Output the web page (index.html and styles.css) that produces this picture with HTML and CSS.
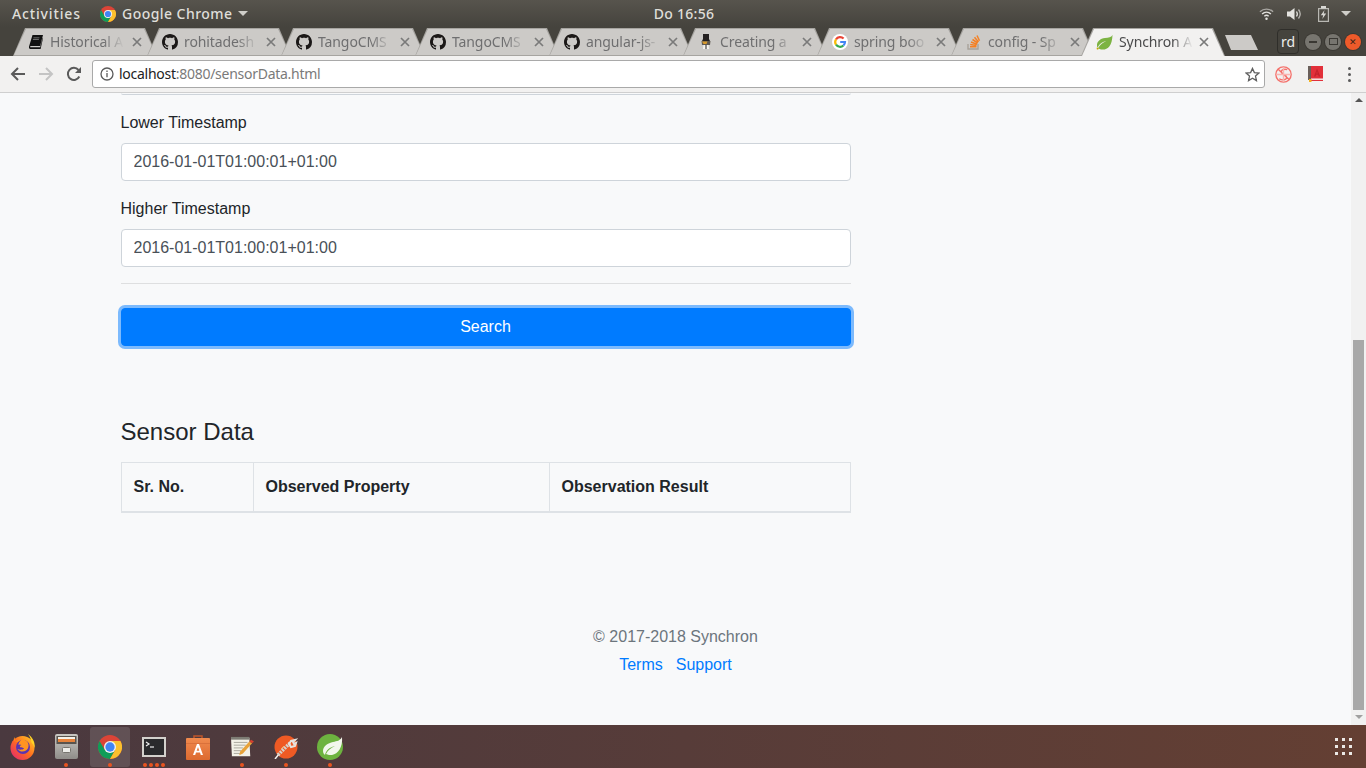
FILE: index.html
```html
<!DOCTYPE html>
<html lang="en">
<head>
    <meta charset="UTF-8">
    <meta name="viewport" content="width=device-width, initial-scale=1.0">
    <title>Synchron Admin</title>
    <link rel="stylesheet" href="styles.css">
</head>
<body>

    <svg class="defs" width="0" height="0">
        <defs>
            <linearGradient id="g-fox" x1="1" y1="0" x2="0" y2="1">
                <stop offset="0" stop-color="#ffd426"/>
                <stop offset=".5" stop-color="#ff6a1f"/>
                <stop offset="1" stop-color="#e0207a"/>
            </linearGradient>
            <linearGradient id="g-metal" x1="0" y1="0" x2="0" y2="1">
                <stop offset="0" stop-color="#c9c7c3"/>
                <stop offset="1" stop-color="#8f8d89"/>
            </linearGradient>
            <linearGradient id="g-bag" x1="0" y1="0" x2="0" y2="1">
                <stop offset="0" stop-color="#f08a4e"/>
                <stop offset="1" stop-color="#dd6a30"/>
            </linearGradient>
        </defs>
        <symbol id="i-close" viewBox="0 0 10 10">
            <path fill="none" stroke="#7a7a7a" stroke-width="1.700" d="M1 1l8 8M9 1l-8 8"/>
        </symbol>
        <symbol id="i-github" viewBox="0 0 16 16">
            <path fill="#1b1817" d="M8 0C3.58 0 0 3.58 0 8c0 3.54 2.29 6.53 5.47 7.59.4.07.55-.17.55-.38 0-.19-.01-.82-.01-1.49-2.01.37-2.53-.49-2.69-.94-.09-.23-.48-.94-.82-1.13-.28-.15-.68-.52-.01-.53.63-.01 1.08.58 1.23.82.72 1.21 1.87.87 2.33.66.07-.52.28-.87.51-1.07-1.78-.2-3.64-.89-3.64-3.95 0-.87.31-1.59.82-2.15-.08-.2-.36-1.02.08-2.12 0 0 .67-.21 2.2.82.64-.18 1.32-.27 2-.27.68 0 1.36.09 2 .27 1.53-1.04 2.2-.82 2.2-.82.44 1.1.16 1.92.08 2.12.51.56.82 1.27.82 2.15 0 3.07-1.87 3.75-3.65 3.95.29.25.54.73.54 1.48 0 1.07-.01 1.93-.01 2.2 0 .21.15.46.55.38A8.013 8.013 0 0 0 16 8c0-4.42-3.58-8-8-8z"/>
        </symbol>
        <symbol id="i-chrome" viewBox="0 0 32 32">
            <circle cx="16" cy="16" r="16" fill="#db4437"/>
            <path fill="#0f9d58" d="M2.100 8A16 16 0 0 0 16 32l6.900-12L16 22l-6.900-2z"/>
            <path fill="#fbc02d" d="M16 32A16 16 0 0 0 29.900 8H16l6.900 12z"/>
            <circle cx="16" cy="16" r="8" fill="#f2f2f2"/>
            <circle cx="16" cy="16" r="6.200" fill="#4285f4"/>
        </symbol>
        <symbol id="i-spring" viewBox="0 0 18 16">
            <path fill="#7cb342" d="M17.500.5C16 3 13.500 3.400 9.500 3.800 4.500 4.300 1 7.500 1 11.500c0 1 .2 1.800.6 2.500 2-4 5.400-6.400 9.400-7-3.500 1.500-6.800 4-8.800 7.600C3.600 15.500 5 16 7 16c6 0 10-4.500 10.500-15.500z"/>
            <path fill="#c6a700" d="M.6 14h2.500l-.8 2H1z"/>
        </symbol>
    </svg>

    <header class="topbar">
        <div class="topbar-left">
            <span class="activities">Activities</span>
            <span class="app-menu">
                <svg class="topbar-chrome" width="16" height="16"><use href="#i-chrome"/></svg>
                Google Chrome
                <i class="caret"></i>
            </span>
        </div>
        <div class="clock">Do 16:56</div>
        <div class="topbar-right">
            <svg width="15" height="14" viewBox="0 0 16 14" fill="none" stroke="#e4e3df" stroke-width="1.500">
                <path d="M1 4.500c4-3.600 10-3.600 14 0" opacity=".6"/>
                <path d="M3.300 7c2.700-2.400 6.700-2.400 9.400 0"/>
                <path d="M5.700 9.400c1.300-1.100 3.300-1.100 4.600 0"/>
                <circle cx="8" cy="12" r="1.300" fill="#e4e3df" stroke="none"/>
            </svg>
            <svg width="16" height="14" viewBox="0 0 16 14" fill="none" stroke="#e4e3df" stroke-width="1.300">
                <path fill="#e4e3df" stroke="none" d="M0 4.500h3L7.500 1v12L3 9.500H0z"/>
                <path d="M9.500 4.500c1 1.500 1 3.500 0 5"/>
                <path d="M11.500 2.500c2 2.600 2 6.400 0 9" opacity=".7"/>
            </svg>
            <svg width="11" height="16" viewBox="0 0 11 16">
                <path fill="none" stroke="#b9b8b3" stroke-width="1.200" d="M.6 2.600h9.800v12.800H.6z"/>
                <path fill="#d8d7d3" d="M3 0h5v2.600H3zM6.500 4 2.800 9.300h2.400L4.300 13l3.900-5.500H5.700z"/>
            </svg>
            <i class="caret"></i>
        </div>
    </header>

    <div class="tabstrip">
        <div class="tab">
            <svg class="favicon" width="16" height="14" viewBox="0 0 14 14">
                <path fill="#111" d="M3.500 0H14l-2.800 11H2.200C1.300 11 1 11.600 1.300 12.200h9.900l2.400-9.400.4.500L11.600 14H1.500C.2 14-.3 12.800.1 11.300z"/>
                <path fill="#fff" d="M4.500 2.500h6l-.2.800h-6zM4 4.300h6l-.2.800h-6z" opacity=".5"/>
            </svg>
            <span class="tab-title">Historical A</span>
            <svg class="tab-close" width="10" height="10"><use href="#i-close"/></svg>
        </div>
        <div class="tab">
            <svg class="favicon" width="16" height="16"><use href="#i-github"/></svg>
            <span class="tab-title">rohitadesh</span>
            <svg class="tab-close" width="10" height="10"><use href="#i-close"/></svg>
        </div>
        <div class="tab">
            <svg class="favicon" width="16" height="16"><use href="#i-github"/></svg>
            <span class="tab-title">TangoCMS</span>
            <svg class="tab-close" width="10" height="10"><use href="#i-close"/></svg>
        </div>
        <div class="tab">
            <svg class="favicon" width="16" height="16"><use href="#i-github"/></svg>
            <span class="tab-title">TangoCMS</span>
            <svg class="tab-close" width="10" height="10"><use href="#i-close"/></svg>
        </div>
        <div class="tab">
            <svg class="favicon" width="16" height="16"><use href="#i-github"/></svg>
            <span class="tab-title">angular-js-</span>
            <svg class="tab-close" width="10" height="10"><use href="#i-close"/></svg>
        </div>
        <div class="tab">
            <svg class="favicon" width="16" height="16" viewBox="0 0 16 16">
                <path fill="#232020" d="M5 0h6v5l1 2H4l1-2z"/>
                <path fill="#5f5a52" d="M3.500 7h9l-.5 4h-8z"/>
                <path fill="#d99a2b" d="M4 7.500h5.500L8.500 10H5.500z"/>
                <path fill="#f6f4f0" d="M5.500 11h5l.5 4H5z"/>
                <path fill="#232020" d="M7.500 11h1v4h-1z"/>
            </svg>
            <span class="tab-title">Creating a</span>
            <svg class="tab-close" width="10" height="10"><use href="#i-close"/></svg>
        </div>
        <div class="tab">
            <svg class="favicon" width="16" height="16" viewBox="0 0 16 16">
                <circle cx="8" cy="8" r="8" fill="#fff"/>
                <g fill="none" stroke-width="2.200">
                    <path stroke="#ea4335" d="M11.600 4.500A5 5 0 0 0 4 5.300"/>
                    <path stroke="#fbbc05" d="M4 5.300a5 5 0 0 0 0 5.400"/>
                    <path stroke="#34a853" d="M4 10.700a5 5 0 0 0 7.400.8"/>
                    <path stroke="#4285f4" d="M11.400 11.500A5 5 0 0 0 13 8H8.200"/>
                </g>
            </svg>
            <span class="tab-title">spring boo</span>
            <svg class="tab-close" width="10" height="10"><use href="#i-close"/></svg>
        </div>
        <div class="tab">
            <svg class="favicon" width="16" height="16" viewBox="0 0 14 16" fill="none">
                <path stroke="#a8a39b" stroke-width="1.400" d="M1 10v5h10v-5"/>
                <path stroke="#f48024" stroke-width="1.500" d="M3 12.800h6.500M3.200 10.500l6.300.9M4 8l6 2.200M5.500 5.500l5.300 3.500M7.500 3.300l4 4.700M10 1.500l2.500 5.300"/>
            </svg>
            <span class="tab-title">config - Sp</span>
            <svg class="tab-close" width="10" height="10"><use href="#i-close"/></svg>
        </div>
        <div class="tab active">
            <svg class="favicon" width="17" height="16"><use href="#i-spring"/></svg>
            <span class="tab-title">Synchron A</span>
            <svg class="tab-close" width="10" height="10"><use href="#i-close"/></svg>
        </div>
        <div class="newtab"></div>
        <div class="strip-right">
            <div class="profile">rd</div>
            <div class="winbtn"><i class="win-min"></i></div>
            <div class="winbtn"><i class="win-max"></i></div>
            <div class="winbtn close">✕</div>
        </div>
    </div>

    <div class="toolbar">
        <svg class="nav-icon" width="16" height="16" viewBox="0 0 16 16" fill="none" stroke="#5a5a5a" stroke-width="2">
            <path d="M15 8H2M8 2 2 8l6 6"/>
        </svg>
        <svg class="nav-icon" width="16" height="16" viewBox="0 0 16 16" fill="none" stroke="#c4c4c4" stroke-width="2">
            <path d="M1 8h13M8 2l6 6-6 6"/>
        </svg>
        <svg class="nav-icon" width="16" height="16" viewBox="0 0 16 16" fill="none" stroke="#5a5a5a" stroke-width="2">
            <path d="M13.300 10.500A6 6 0 1 1 12.500 4"/>
            <path fill="#5a5a5a" stroke="none" d="M15 1v6H9z"/>
        </svg>
        <div class="omnibox">
            <svg width="14" height="14" viewBox="0 0 14 14" fill="none" stroke="#5a5a5a" stroke-width="1.300">
                <circle cx="7" cy="7" r="6"/>
                <path d="M7 6v4.200M7 3.400v1.500"/>
            </svg>
            <span class="url"><b>localhost</b>:8080/sensorData.html</span>
            <svg class="star" width="15" height="15" viewBox="0 0 16 16" fill="none" stroke="#5f5f5f" stroke-width="1.400">
                <path d="M8 1.500 10 6l4.800.5-3.600 3.200 1 4.800L8 12l-4.200 2.500 1-4.800L1.200 6.500 6 6z"/>
            </svg>
        </div>
        <div class="ext-icons">
            <svg width="17" height="17" viewBox="0 0 16 16" fill="none" stroke="#f4716b" stroke-width="1.300">
                <circle cx="8" cy="8" r="7.200"/>
                <path d="M3 3l10.500 10M11.500 3.500C9 2.500 5.500 3.500 6 6s5 2 5 4.500-4 3.500-7 1.500"/>
                <path stroke="#f9b4b0" d="M8 1v14M1 8h14"/>
            </svg>
            <svg width="15" height="16" viewBox="0 0 15 16">
                <path fill="#e2303a" d="M2 0h13v12.500H2z"/>
                <path fill="#6a5f5a" d="M0 0h3v14H0z"/>
                <path fill="#f9dcdc" d="M3 13h12v1H3z"/>
                <path fill="#e2303a" d="M3 14h12v1H3z"/>
                <path fill="#f3b21b" d="M1 13h2.500v3H1z"/>
                <path fill="#c4222c" d="M9 2.500 6 10.500h1.500l.6-1.800h2l.6 1.800h1.600zm0 2.800.7 2.200H8.300z"/>
            </svg>
            <div class="menu-dots"><i></i><i></i><i></i></div>
        </div>
    </div>

    <div class="viewport">
        <main class="page">
            <div class="container">
                <div class="prev-field"></div>
                <form class="search-form">
                    <div class="form-group">
                        <label for="lower">Lower Timestamp</label>
                        <input type="text" id="lower" value="2016-01-01T01:00:01+01:00">
                    </div>
                    <div class="form-group">
                        <label for="higher">Higher Timestamp</label>
                        <input type="text" id="higher" value="2016-01-01T01:00:01+01:00">
                    </div>
                    <hr>
                    <button type="button" class="btn-search">Search</button>
                </form>

                <h4>Sensor Data</h4>
                <table>
                    <thead>
                        <tr>
                            <th class="col-no">Sr. No.</th>
                            <th class="col-prop">Observed Property</th>
                            <th>Observation Result</th>
                        </tr>
                    </thead>
                </table>
            </div>

            <footer>
                <p>© 2017-2018 Synchron</p>
                <ul>
                    <li><a href="#">Terms</a></li>
                    <li><a href="#">Support</a></li>
                </ul>
            </footer>
        </main>
        <div class="scrollbar">
            <i class="arrow-up"></i>
            <div class="thumb"></div>
            <i class="arrow-down"></i>
        </div>
    </div>

    <div class="dock">
        <div class="dock-item">
            <svg width="25" height="26" viewBox="0 0 25 26">
                <circle cx="12.500" cy="14" r="12" fill="url(#g-fox)"/>
                <path fill="#ffd426" d="M18 0c5 3.500 7.500 9 6.500 14-.5-2.500-1.500-4-3-5.500C21 5 20 2.500 18 0z"/>
                <path fill="#ff8a1f" d="M5 3c-.5 2 0 3.500 1 4.500C8 6 9.500 5 12 5c-1 1-1.500 2-1 2.500C5 9 2 6 5 3z"/>
                <circle cx="13" cy="13" r="7" fill="#5a35b0"/>
                <path fill="#ff9420" d="M11 6c2-1 5 0 6.500 2 2 3 1 7-1.500 8.500-3 2-7 1-8.500-1.500 2 1 5 1 6.500-.5.5-.5-2.500-1-4-1.500-.5-.5 0-1.500 1.500-2-1-.5-2-1-3 0 0-2 1-3.500 2.500-5z"/>
            </svg>
        </div>
        <div class="dock-item dotted">
            <svg width="23" height="25" viewBox="0 0 23 25">
                <rect width="23" height="25" rx="2" fill="url(#g-metal)"/>
                <rect x="1.500" y="2" width="20" height="8" fill="#59544e"/>
                <rect x="3" y="3" width="17" height="2" fill="#f5f1e8"/>
                <rect x="3" y="5" width="17" height="3" fill="#e5813a"/>
                <rect x="7.500" y="13.500" width="8" height="5" rx="1" fill="#eeeeea" stroke="#77756f"/>
            </svg>
            <div class="dots"><i></i></div>
        </div>
        <div class="dock-item running dotted">
            <svg width="24" height="24"><use href="#i-chrome"/></svg>
            <div class="dots"><i></i></div>
        </div>
        <div class="dock-item dotted">
            <svg width="24" height="20" viewBox="0 0 24 20">
                <rect width="24" height="20" fill="#d3d1cc"/>
                <rect x="2" y="2" width="20" height="16" fill="#2a2a2c"/>
                <path fill="none" stroke="#eee" stroke-width="1.200" d="M4 5l3 2-3 2"/>
                <path stroke="#eee" stroke-width="1.200" d="M8 10h4"/>
            </svg>
            <div class="dots"><i></i><i></i><i></i><i></i></div>
        </div>
        <div class="dock-item">
            <svg width="24" height="26" viewBox="0 0 24 26">
                <path fill="none" stroke="#c0562a" stroke-width="1.500" d="M8 5V2h8v3"/>
                <rect y="4" width="24" height="22" rx="1" fill="url(#g-bag)"/>
                <path fill="#c9602f" d="M0 9h24v1H0z" opacity=".5"/>
                <path fill="#fff" d="M11 10h2l4 11h-2.200l-.8-2.500h-4L9.200 21H7zm1 3-1.300 3.800h2.600z"/>
            </svg>
        </div>
        <div class="dock-item dotted">
            <svg width="24" height="22" viewBox="0 0 26 24">
                <path fill="#f4f2e8" d="M1 2h20l1 20H2z"/>
                <path stroke="#a5a399" stroke-width="1" d="M4 7h15M4 10h13M4 13h10M4 16h8M4 19h9"/>
                <path fill="#7d7c74" d="M1 1h20v3H1z"/>
                <path fill="#e8a33a" d="M21 6l3 2-10 11-4 2 1-4z"/>
                <path fill="#d6402f" d="M21 6l2-2 3 2-2 2z"/>
            </svg>
            <div class="dots"><i></i></div>
        </div>
        <div class="dock-item dotted">
            <svg width="24" height="24" viewBox="0 0 24 24">
                <circle cx="12" cy="12" r="11.500" fill="#ef5a24"/>
                <path stroke="#f4f1ec" stroke-width="1.500" d="M1 24l4-5"/>
                <path stroke="#d6d2cc" stroke-width="3.500" stroke-dasharray="2 1" d="M4 20 16 8"/>
                <path stroke="#f6b06a" stroke-width="1" d="M7 14l3-3"/>
                <path fill="none" stroke="#e6e3de" stroke-width="2" d="M15 9l2-3 4-1-2 2 1 2 2-1-1 3-4 1z"/>
            </svg>
            <div class="dots"><i></i></div>
        </div>
        <div class="dock-item dotted">
            <svg width="26" height="26" viewBox="0 0 26 26">
                <circle cx="13" cy="13" r="13" fill="#6db33f"/>
                <path fill="#f2f7ec" d="M25 3c-2 4-5 4-9 5-5 1-10 4-10 9 0 2 1 3 2 4 1-5 5-8 10-9-4 2-7 4-9 8 2 1 4 1 6 1 6-1 11-8 10-18z"/>
            </svg>
            <div class="dots"><i></i></div>
        </div>
        <div class="app-grid">
            <i></i><i></i><i></i><i></i><i></i><i></i><i></i><i></i><i></i>
        </div>
    </div>

</body>
</html>
```

FILE: styles.css
```css
* {
    box-sizing: border-box;
}

html, body {
    height: 100%;
}

body {
    margin: 0;
    height: 768px;
    overflow: hidden;
    display: flex;
    flex-direction: column;
    font-family: "Liberation Sans", Arial, sans-serif;
    font-size: 16px;
    line-height: 24px;
    color: #212529;
    background-color: #f8f9fa;
}

.defs {
    position: absolute;
}

/* desktop top bar */
.topbar {
    height: 27px;
    flex: none;
    display: grid;
    grid-template-columns: 1fr auto 1fr;
    align-items: center;
    padding: 0 12px;
    background: linear-gradient(#57544d, #45433d);
    color: #dfded9;
    font-family: "Noto Sans", sans-serif;
    font-size: 14px;
    font-weight: 500;
    letter-spacing: .3px;
}

.topbar-left {
    display: flex;
    align-items: center;
}

.activities {
    width: 88px;
    letter-spacing: .85px;
}

.app-menu {
    display: flex;
    align-items: center;
    letter-spacing: .45px;
}

.topbar-chrome {
    margin-right: 6px;
}

.caret {
    display: block;
    width: 0;
    height: 0;
    border-left: 5px solid transparent;
    border-right: 5px solid transparent;
    border-top: 5px solid #cfcec9;
}

.app-menu .caret {
    margin-left: 6px;
}

.clock {
    margin-left: 2px;
}

.topbar-right {
    display: flex;
    align-items: center;
    justify-content: flex-end;
    gap: 13px;
    padding-right: 3px;
}

.topbar-right svg:nth-child(3) {
    margin: 0 -1px 0 2px;
}

/* chrome tabs */
.tabstrip {
    height: 29px;
    flex: none;
    display: flex;
    align-items: flex-end;
    padding-left: 13px;
    background: #45433d;
    font-family: "Noto Sans", sans-serif;
    font-size: 14px;
}

.tab {
    position: relative;
    width: 144px;
    height: 28px;
    margin-right: -10px;
    display: flex;
    align-items: center;
    padding: 0 0 0 15px;
    background: #a6a4a0;
    clip-path: polygon(12px 0, 132px 0, 144px 100%, 0 100%);
    color: #6f6f70;
}

.tab::before {
    content: "";
    position: absolute;
    top: 1px;
    left: 0;
    right: 0;
    bottom: 1px;
    background: #cccac7;
    clip-path: polygon(13px 0, 131px 0, 143px 100%, 1px 100%);
}

.tab > * {
    position: relative;
}

.tab.active {
    z-index: 1;
    margin-left: -4px;
    color: #4b4b4c;
}

.tab.active::before {
    bottom: 0;
    background: #f2f1f0;
}

.favicon {
    flex: none;
    margin-right: 6px;
}

.tab-title {
    width: 74px;
    flex: none;
    overflow: hidden;
    white-space: nowrap;
    letter-spacing: -.1px;
    -webkit-mask-image: linear-gradient(to right, #000 72%, transparent);
    mask-image: linear-gradient(to right, #000 72%, transparent);
}

.tab-close {
    flex: none;
    margin-left: 8px;
}

.tab.active .tab-close {
    margin-left: 6px;
}

.newtab {
    width: 33px;
    height: 15px;
    margin: 0 0 6px 10px;
    background: #cccac7;
    clip-path: polygon(0 0, 26px 0, 100% 100%, 6px 100%);
}

.strip-right {
    margin-left: auto;
    height: 29px;
    display: flex;
    align-items: center;
    padding-right: 5px;
    gap: 4px;
}

.profile {
    width: 22px;
    height: 25px;
    margin-right: 2px;
    border: 1px solid #2f2e2a;
    border-radius: 4px;
    text-align: center;
    line-height: 23px;
    font-size: 14px;
    color: #eeeeea;
}

.winbtn {
    width: 16px;
    height: 16px;
    border-radius: 50%;
    display: flex;
    align-items: center;
    justify-content: center;
    background: #77756f;
    box-shadow: 0 0 0 1px #3a3833;
}

.winbtn.close {
    background: #ee5a2a;
    color: #3a2418;
    font-size: 9px;
}

.win-min {
    width: 8px;
    height: 2px;
    background: #3a3833;
}

.win-max {
    width: 9px;
    height: 7px;
    border: 1px solid #3a3833;
}

/* chrome toolbar */
.toolbar {
    height: 37px;
    flex: none;
    display: flex;
    align-items: center;
    padding: 0 10px;
    background: #f2f1f0;
    border-bottom: 1px solid #cfcfcf;
}

.nav-icon {
    flex: none;
    margin-right: 12px;
}

.nav-icon:nth-child(3) {
    margin-right: 10px;
}

.omnibox {
    width: 1173px;
    height: 28px;
    flex: none;
    display: flex;
    align-items: center;
    padding: 0 4px 0 7px;
    background: #fff;
    border: 1px solid #a9a9a9;
    border-radius: 3px;
}

.url {
    margin-left: 5px;
    font-family: "Noto Sans", sans-serif;
    font-size: 14px;
    letter-spacing: -.27px;
    color: #7a7a7a;
}

.url b {
    font-weight: 400;
    color: #222;
}

.star {
    margin-left: auto;
}

.ext-icons {
    flex: 1;
    display: flex;
    align-items: center;
    gap: 16px;
    padding-left: 10px;
}

.menu-dots {
    display: flex;
    flex-direction: column;
    gap: 3px;
    margin-left: 9px;
}

.menu-dots i {
    display: block;
    width: 3px;
    height: 3px;
    border-radius: 50%;
    background: #5a5a5a;
}

/* page area */
.viewport {
    flex: 1;
    min-height: 0;
    display: flex;
}

.page {
    flex: 1;
    min-width: 0;
    background: #f8f9fa;
}

.container {
    width: 730px;
    margin-left: 120.5px;
}

.prev-field {
    height: 2px;
    margin-bottom: 16px;
    border-bottom: 1px solid #ced4da;
    border-radius: 0 0 4px 4px;
}

.form-group {
    margin-bottom: 16px;
}

label {
    display: block;
    margin-bottom: 8px;
}

input {
    display: block;
    width: 100%;
    height: 38px;
    padding: 6px 12px;
    font: inherit;
    color: #495057;
    background: #fff;
    border: 1px solid #ced4da;
    border-radius: 4px;
}

hr {
    margin: 16px 0 24px;
    border: 0;
    border-top: 1px solid rgba(0, 0, 0, .1);
}

.btn-search {
    display: block;
    width: 100%;
    height: 38px;
    font: inherit;
    color: #fff;
    background: #007bff;
    border: 1px solid #007bff;
    border-radius: 4px;
    box-shadow: 0 0 0 3px rgba(0, 123, 255, .5);
}

h4 {
    margin: 71px 0 16px;
    font-size: 24px;
    font-weight: 500;
    line-height: 29px;
}

table {
    width: 100%;
    border-collapse: collapse;
    table-layout: fixed;
}

th {
    padding: 12px;
    text-align: left;
    font-weight: 700;
    border: 1px solid #dee2e6;
    border-bottom-width: 2px;
}

.col-no {
    width: 132px;
}

.col-prop {
    width: 296px;
}

footer {
    margin-top: 112px;
    text-align: center;
    color: #6c757d;
}

footer p {
    margin: 0 0 4px;
}

footer ul {
    margin: 0;
    padding: 0;
    list-style: none;
    display: flex;
    justify-content: center;
    gap: 13px;
}

footer a {
    color: #007bff;
    text-decoration: none;
}

.scrollbar {
    width: 15px;
    flex: none;
    display: flex;
    flex-direction: column;
    align-items: center;
    background: #f1f1f1;
}

.arrow-up, .arrow-down {
    display: block;
    width: 0;
    height: 0;
    border-left: 4px solid transparent;
    border-right: 4px solid transparent;
}

.arrow-up {
    margin-top: 5px;
    border-bottom: 4px solid #555;
}

.arrow-down {
    margin-top: 5px;
    border-top: 4px solid #a0a0a0;
}

.thumb {
    width: 11px;
    height: 370px;
    margin-top: 238px;
    background: #a8a8a8;
}

/* ubuntu dock */
.dock {
    height: 43px;
    flex: none;
    display: flex;
    align-items: center;
    padding-left: 2px;
    gap: 4px;
    background: linear-gradient(to right, #4a393f, #643f33);
}

.dock-item {
    position: relative;
    width: 40px;
    height: 40px;
    flex: none;
    display: flex;
    align-items: center;
    justify-content: center;
    border-radius: 3px;
}

.dock-item.running {
    background: rgba(255, 255, 255, .12);
}

.dots {
    position: absolute;
    left: 0;
    right: 0;
    bottom: 0;
    display: flex;
    justify-content: center;
    gap: 2px;
}

.dots i {
    display: block;
    width: 4px;
    height: 4px;
    border-radius: 50%;
    background: #e95420;
}

.app-grid {
    margin-left: auto;
    margin-right: 14px;
    display: grid;
    grid-template-columns: repeat(3, 3px);
    gap: 4px;
}

.app-grid i {
    display: block;
    width: 3px;
    height: 3px;
    background: #ece9e6;
}
```
